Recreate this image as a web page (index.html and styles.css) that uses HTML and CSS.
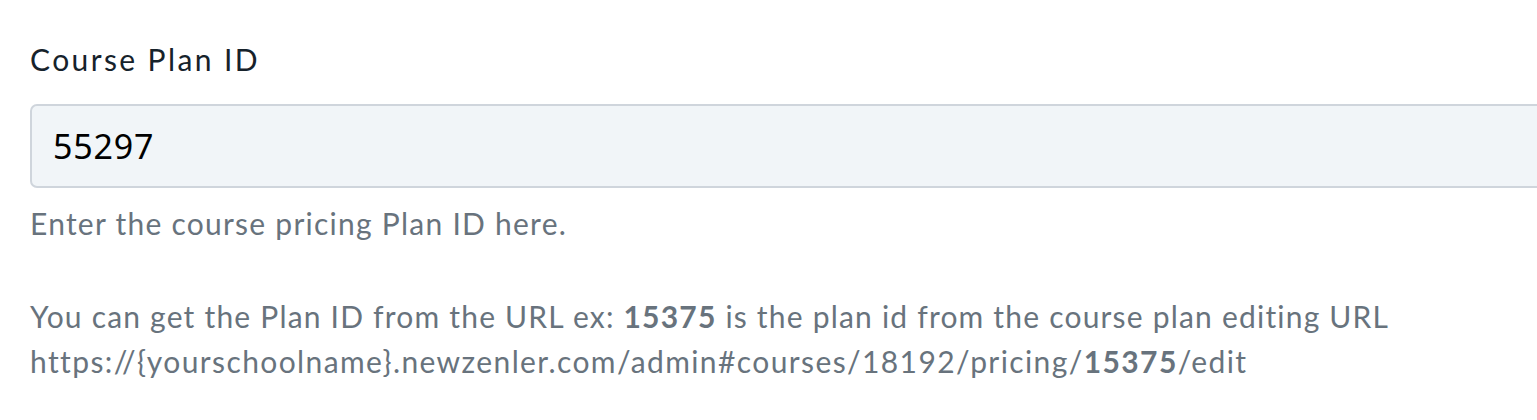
FILE: index.html
```html
<!DOCTYPE html>
<html>
<head>
<meta charset="utf-8">
<link rel="stylesheet" href="styles.css">
</head>
<body>
<div class="form-group">
  <label class="field-label" for="plan">Course Plan ID</label>
  <input class="field-input" id="plan" type="text" value="55297">
  <p class="help">Enter the course pricing Plan ID here.</p>
  <p class="help help-note">You can get the Plan ID from the URL ex: <b>15375</b> is the plan id from the course plan editing URL<br><span class="url">https://{yourschoolname}.newzenler.com/admin#courses/18192/pricing/<b>15375</b>/edit</span></p>
</div>
</body>
</html>
```

FILE: styles.css
```css
html, body {
  margin: 0;
  padding: 0;
  background: #ffffff;
  overflow: hidden;
}
.form-group {
  width: 1560px;
  padding: 37px 0 0 30px;
  display: flex;
  flex-direction: column;
  align-items: flex-start;
  font-family: "Lato", "Liberation Sans", sans-serif;
  font-size: 30px;
  line-height: 45px;
}
.field-label {
  color: #16222b;
  letter-spacing: 2.4px;
  margin-bottom: 22px;
}
.field-input {
  box-sizing: border-box;
  width: 100%;
  height: 84px;
  margin: 0;
  padding: 0 21px;
  border: 2px solid #cfd5dc;
  border-radius: 7px;
  background: #f1f5f8;
  font-family: "Noto Sans", sans-serif;
  font-size: 34px;
  letter-spacing: 0.8px;
  color: #000000;
  outline: none;
}
.help {
  margin: 13px 0 0 0;
  color: #68737d;
  letter-spacing: 1.25px;
}
.help-note {
  margin-top: 48px;
  letter-spacing: 1.2px;
}
.help-note .url {
  letter-spacing: 1.4px;
}
.help b {
  font-weight: 700;
}
```
